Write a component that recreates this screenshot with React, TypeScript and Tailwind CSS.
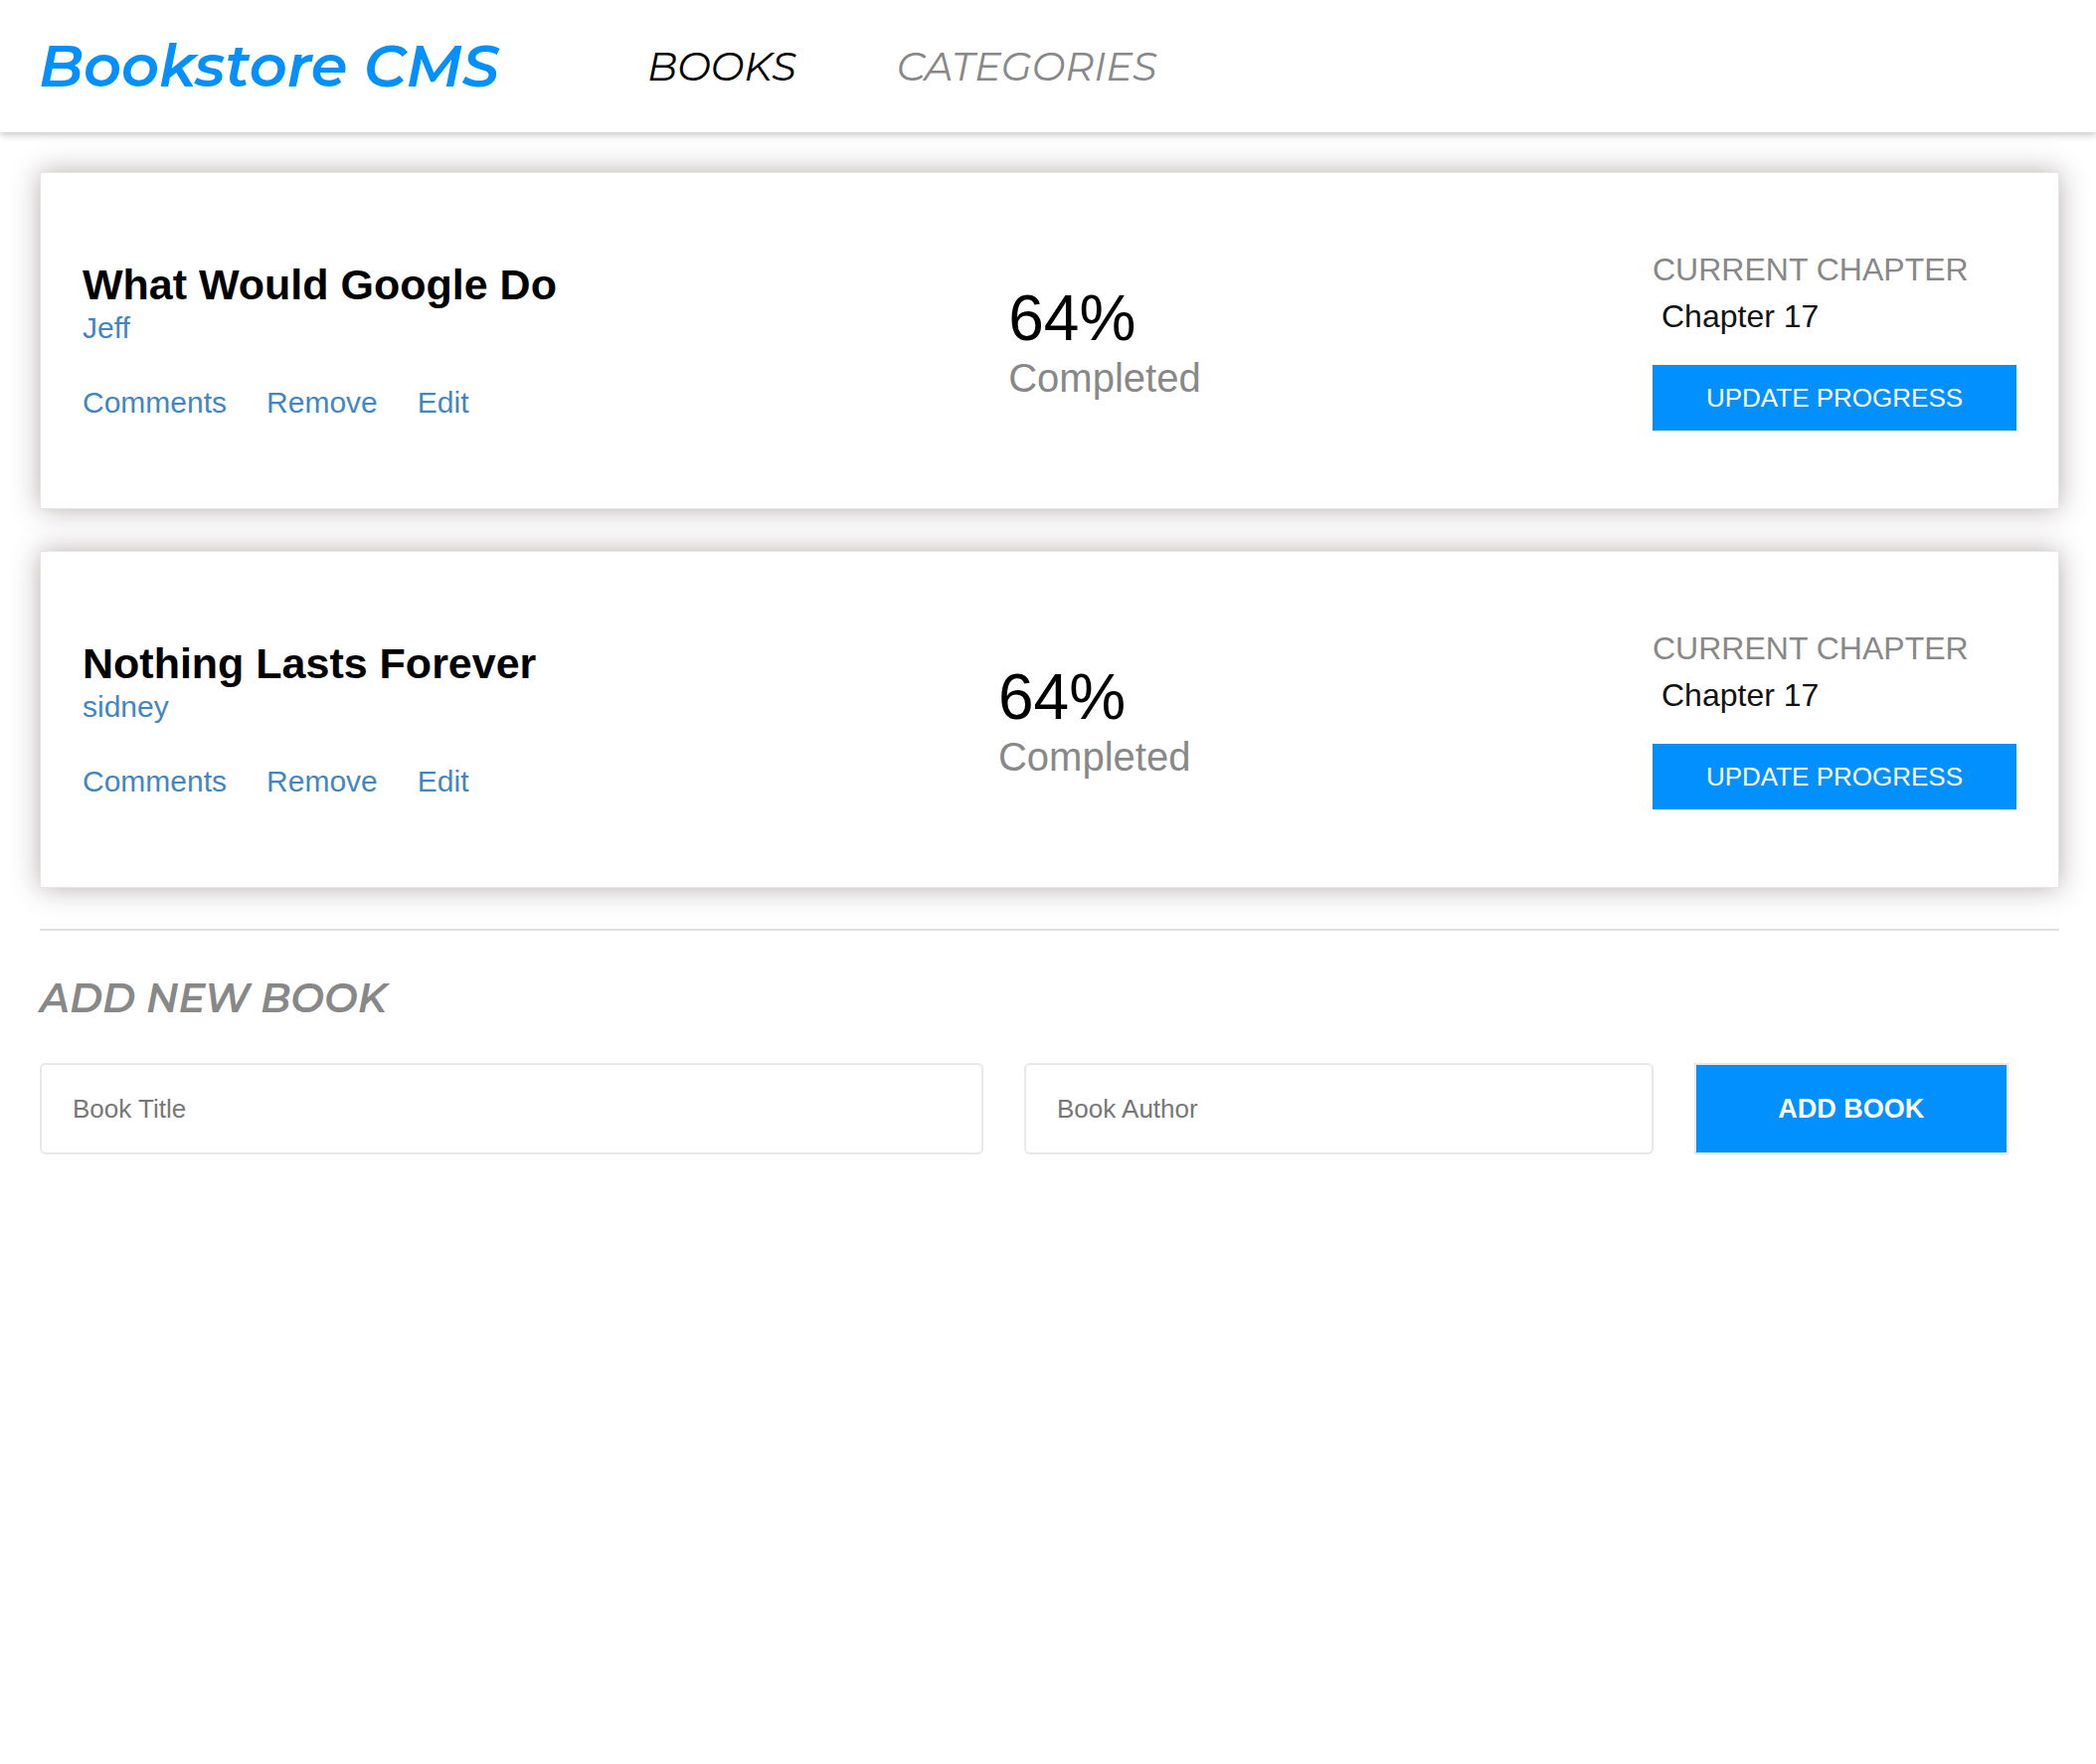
import { useState } from 'react';

type Book = {
  id: string;
  title: string;
  author: string;
  progress: number;
  chapter: string;
};

const books: Book[] = [
  { id: '1', title: 'What Would Google Do', author: 'Jeff', progress: 64, chapter: 'Chapter 17' },
  { id: '2', title: 'Nothing Lasts Forever', author: 'sidney', progress: 64, chapter: 'Chapter 17' },
];

function BookCard({ book }: { book: Book }) {
  return (
    <li className="h-[339px] bg-white border border-[#e6e6e6] shadow-[0_0_26px_rgba(95,75,75,0.45)] px-[42px] flex items-center justify-between">
      <div className="flex flex-col">
        <h2 className="text-[43px] font-bold leading-none text-black">{book.title}</h2>
        <p className="mt-[7px] text-[30px] leading-none text-[#4386bf]">{book.author}</p>
        <div className="mt-[45px] flex gap-[40px] text-[30px] leading-none text-[#4386bf]">
          <button type="button">Comments</button>
          <button type="button">Remove</button>
          <button type="button">Edit</button>
        </div>
      </div>

      <div className="flex flex-col pt-[2px]">
        <p className="text-[64px] leading-none text-black">{book.progress}%</p>
        <p className="mt-[8px] text-[40px] leading-none text-[#888]">Completed</p>
      </div>

      <div className="flex flex-col w-[366px] pt-[3px]">
        <p className="text-[32px] leading-none text-[#888]">CURRENT CHAPTER</p>
        <p className="mt-[15px] pl-[9px] text-[32px] leading-none text-[#121212]">{book.chapter}</p>
        <button
          type="button"
          className="mt-[33px] h-[66px] w-full bg-[#0290ff] text-white text-[26px] leading-none"
        >
          UPDATE PROGRESS
        </button>
      </div>
    </li>
  );
}

export default function App() {
  const [title, setTitle] = useState('');
  const [author, setAuthor] = useState('');

  return (
    <div className="min-h-screen bg-white font-['Liberation_Sans',Arial,sans-serif]">
      <header className="relative z-10 h-[133px] bg-white flex items-center pl-[39px] shadow-[0_2px_8px_rgba(0,0,0,0.25)]">
        <h1 className="text-[59px] font-semibold italic leading-none text-[#0290ff] font-['Montserrat','Open_Sans',sans-serif]">
          Bookstore CMS
        </h1>
        <nav className="ml-[149px] flex gap-[101px] text-[40px] italic leading-none font-['Montserrat','Open_Sans',sans-serif]">
          <a href="#books" className="text-black">BOOKS</a>
          <a href="#categories" className="text-[#888]">CATEGORIES</a>
        </nav>
      </header>

      <main className="pl-[40px] pr-[37px] pt-[40px] pb-[60px]">
        <ul className="flex flex-col gap-[42px]">
          {books.map((book) => (
            <BookCard key={book.id} book={book} />
          ))}
        </ul>

        <hr className="mt-[41px] border-0 border-t-2 border-[#e0e0e0]" />

        <h3 className="mt-[48px] text-[40px] font-semibold italic leading-none text-[#888] font-['Montserrat','Open_Sans',sans-serif]">
          ADD NEW BOOK
        </h3>

        <form
          className="mt-[45px] grid grid-cols-[3fr_2fr_1fr] gap-[41px] pr-[51px]"
          onSubmit={(e) => e.preventDefault()}
        >
          <input
            value={title}
            onChange={(e) => setTitle(e.target.value)}
            placeholder="Book Title"
            className="min-w-0 h-[92px] border-2 border-[#e8e8e8] rounded-[6px] px-[31px] text-[26px] text-black placeholder:text-[#777] outline-none"
          />
          <input
            value={author}
            onChange={(e) => setAuthor(e.target.value)}
            placeholder="Book Author"
            className="min-w-0 h-[92px] border-2 border-[#e8e8e8] rounded-[6px] px-[31px] text-[26px] text-black placeholder:text-[#777] outline-none"
          />
          <button
            type="submit"
            className="min-w-0 h-[92px] bg-[#0290ff] border-2 border-[#e8e8e8] text-white text-[27px] font-bold"
          >
            ADD BOOK
          </button>
        </form>
      </main>
    </div>
  );
}
